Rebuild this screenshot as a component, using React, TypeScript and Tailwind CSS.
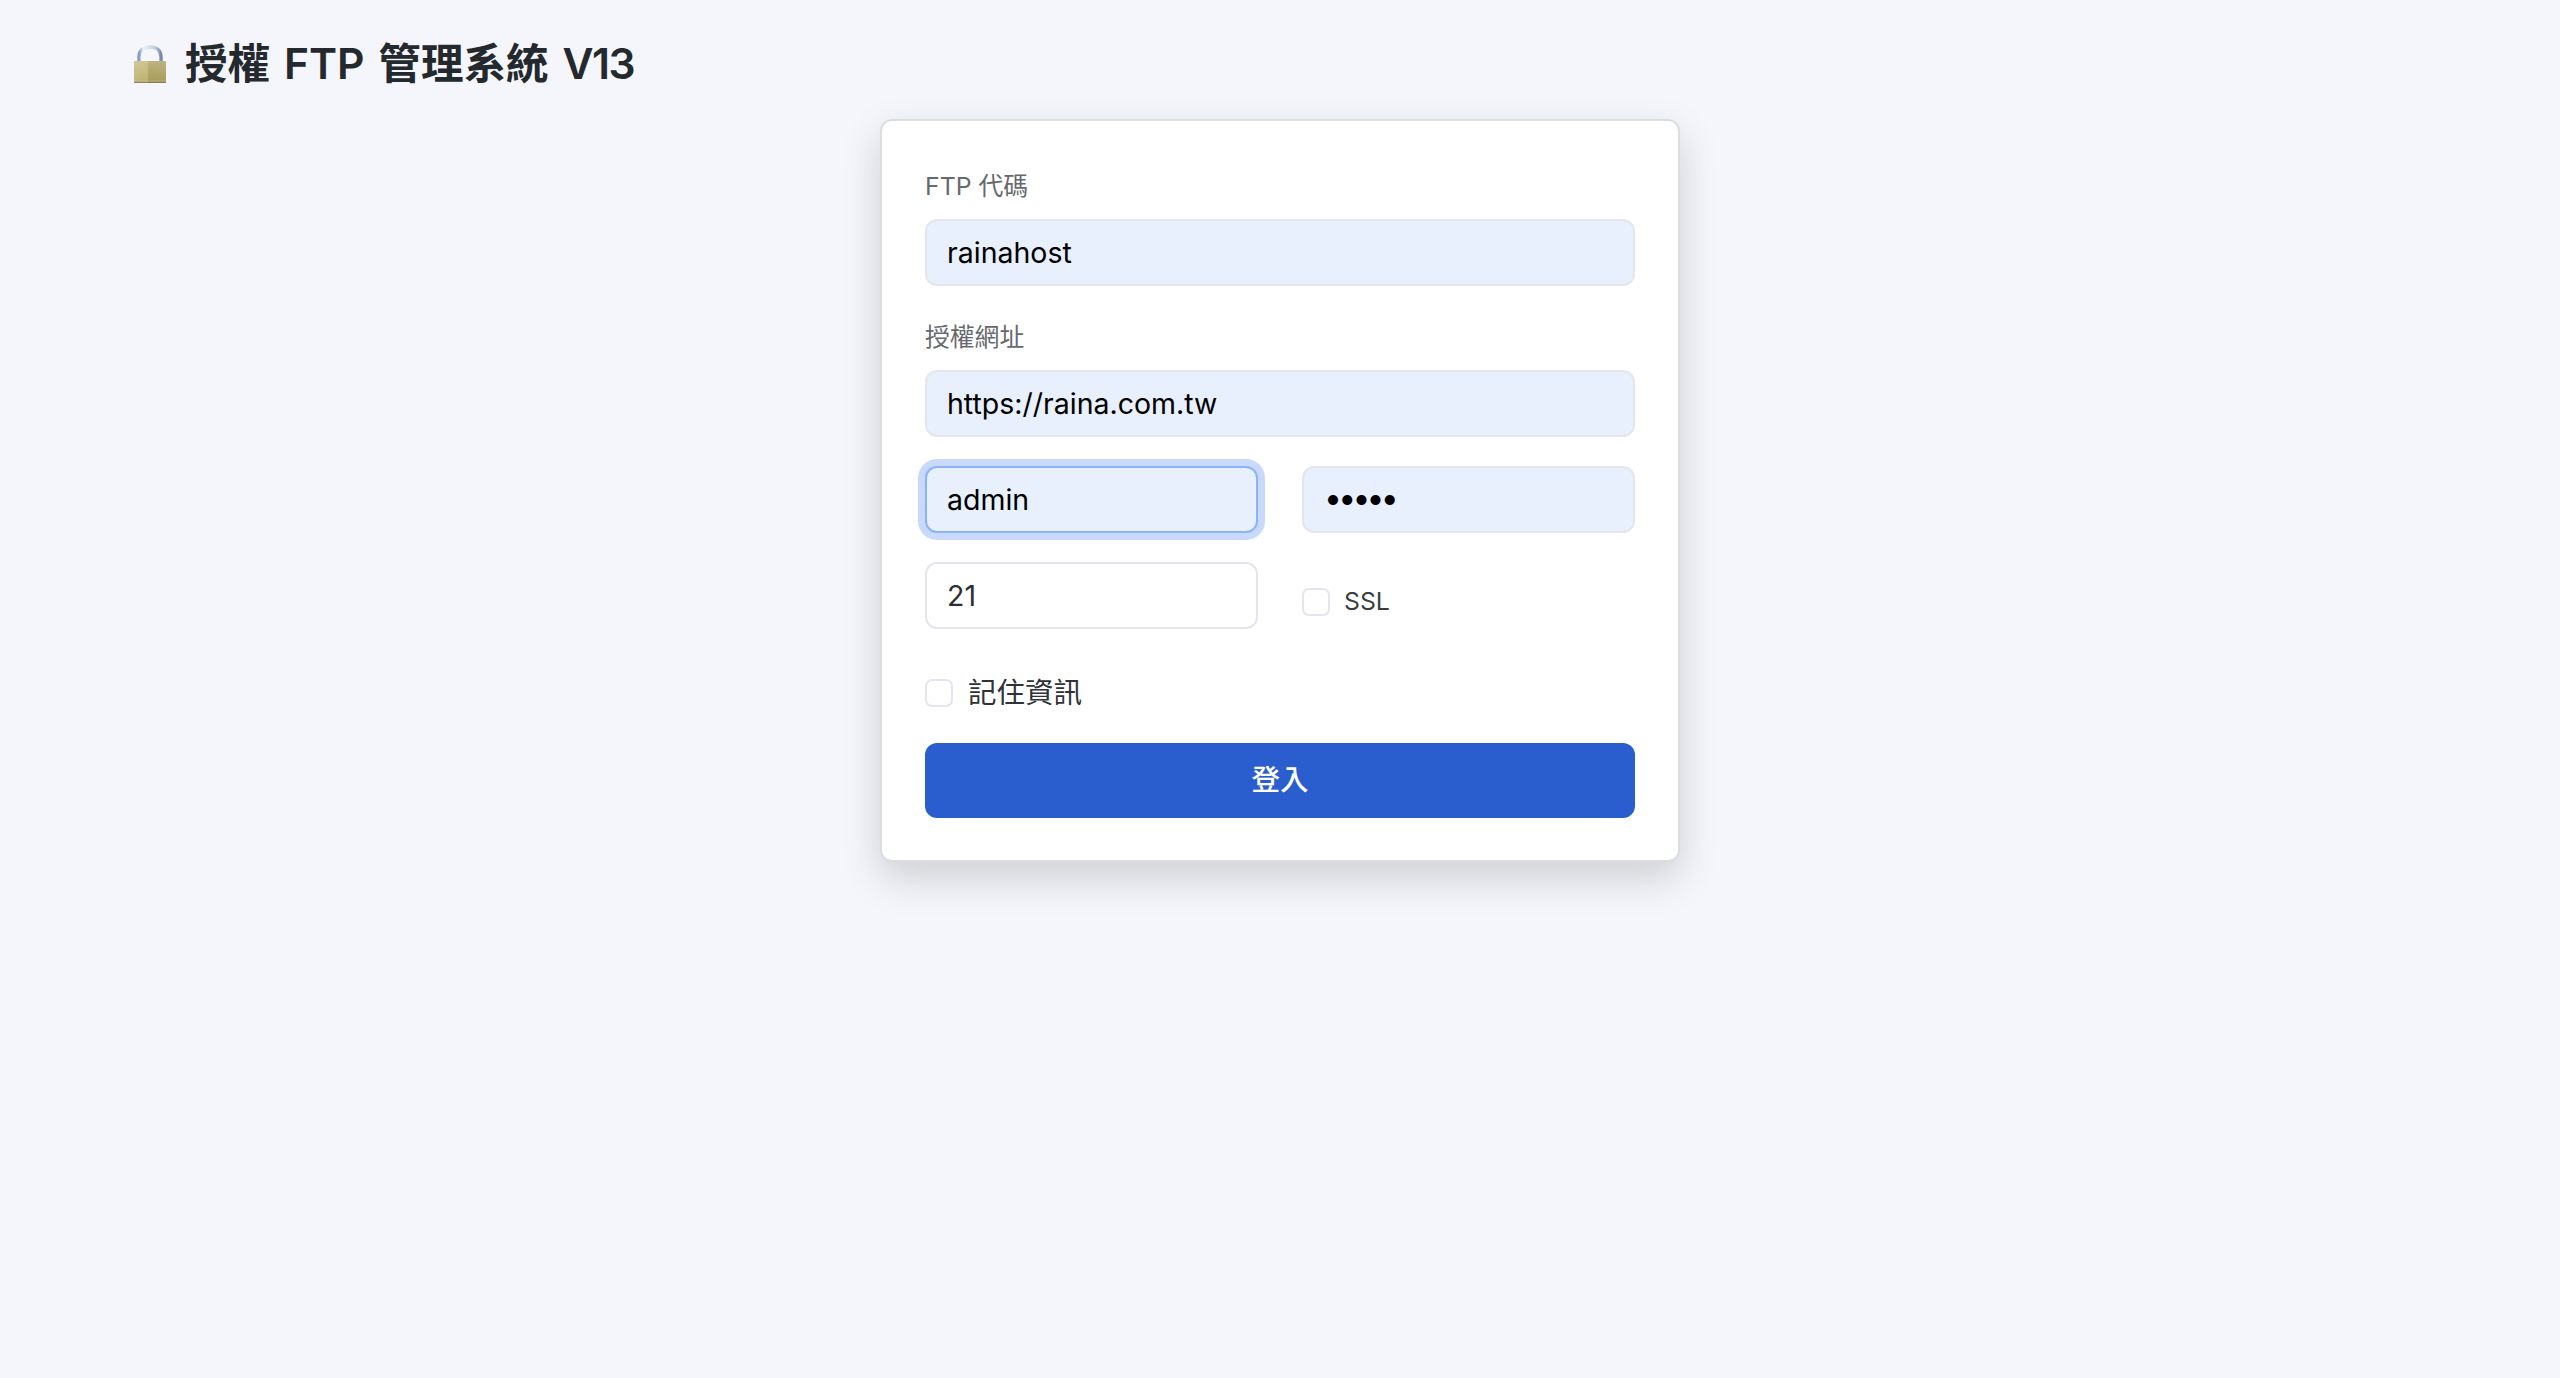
import React from "react";

const FONT = "font-['Inter','Noto_Sans_CJK_TC',sans-serif]";

function LockIcon() {
  return (
    <svg width="32" height="38" viewBox="0 0 32 38" className="shrink-0" aria-hidden="true">
      <defs>
        <linearGradient id="body" x1="0" y1="0" x2="1" y2="0">
          <stop offset="0" stopColor="#c4b878" />
          <stop offset="0.42" stopColor="#bfb372" />
          <stop offset="0.46" stopColor="#a99d5c" />
          <stop offset="1" stopColor="#ab9f5e" />
        </linearGradient>
        <linearGradient id="shade" x1="0" y1="0" x2="0" y2="1">
          <stop offset="0" stopColor="#ffffff" stopOpacity="0.22" />
          <stop offset="0.86" stopColor="#ffffff" stopOpacity="0" />
          <stop offset="1" stopColor="#4f4820" stopOpacity="0.7" />
        </linearGradient>
        <linearGradient id="shackle" x1="0" y1="0" x2="1" y2="0">
          <stop offset="0" stopColor="#8398c0" />
          <stop offset="0.2" stopColor="#eef2fa" />
          <stop offset="0.75" stopColor="#bccae2" />
          <stop offset="1" stopColor="#7687a6" />
        </linearGradient>
      </defs>
      <path d="M5 17V12C5 5.5 9.5 2 16 2S27 5.5 27 12V17" fill="none" stroke="url(#shackle)" strokeWidth="3.4" />
      <rect x="0" y="16" width="32" height="22" rx="1" fill="url(#body)" />
      <rect x="0" y="16" width="32" height="22" rx="1" fill="url(#shade)" />
    </svg>
  );
}

const inputBase =
  "block w-full h-[67px] rounded-[12px] border-2 pl-[20px] pr-[21px] text-[28.5px] outline-none";
const autofill = "bg-[#e8effd] text-black";

function Label({ children }: { children: React.ReactNode }) {
  return <label className="block text-[24.8px] leading-[36px] text-[#666a6e] mb-[15px]">{children}</label>;
}

export default function App() {
  return (
    <div className={`min-h-screen bg-[#f4f6fb] ${FONT}`}>
      <header className="h-[119px] pl-[134px] flex items-start pt-[39px] gap-[19px]">
        <div className="h-[50px] flex items-center"><LockIcon /></div>
        <h1 className="text-[42.6px] leading-[50px] font-semibold text-[#24292e] [word-spacing:3px]">
          授權 FTP 管理系統 <span className="tracking-[-1.5px]">V13</span>
        </h1>
      </header>

      <main className="w-[800px] mx-auto bg-white border-2 border-[#dcdde0] rounded-[12px] px-[43px] pt-[47px] pb-[42px] shadow-[0_16px_40px_rgba(0,0,0,0.16)]">
        <Label>FTP 代碼</Label>
        <input readOnly value="rainahost" className={`${inputBase} ${autofill} border-[#e3e6ec]`} />

        <div className="mt-[33px]">
          <Label>授權網址</Label>
          <input readOnly value="https://raina.com.tw" className={`${inputBase} ${autofill} border-[#e3e6ec]`} />
        </div>

        <div className="grid grid-cols-2 gap-x-[44px] gap-y-[29px] mt-[29px]">
          <input
            readOnly
            value="admin"
            className={`${inputBase} ${autofill} border-[#8ab4f8] shadow-[0_0_0_7px_#c9d9fb]`}
          />
          <input
            readOnly
            type="password"
            value="raina"
            className={`${inputBase} ${autofill} border-[#e3e6ec] text-[32px] tracking-[-3.8px] pb-[4px]`}
          />
          <input readOnly value="21" className={`${inputBase} bg-white text-[#2b2f33] border-[#e3e6ec]`} />
          <label className="flex items-center gap-[14px] text-[24.8px] text-[#3a3e42] pt-[12px]">
            <span className="block w-[28px] h-[28px] rounded-[7px] border-2 border-[#e3e6ec] bg-white" />
            SSL
          </label>
        </div>

        <label className="flex items-center gap-[15px] text-[28.5px] leading-[40px] text-[#2f3337] mt-[44px]">
          <span className="block w-[28px] h-[28px] rounded-[7px] border-2 border-[#e3e6ec] bg-white" />
          記住資訊
        </label>

        <button className="block w-full h-[75px] mt-[30px] rounded-[12px] bg-[#2a5ecf] text-white text-[28.5px] font-medium">
          登入
        </button>
      </main>
    </div>
  );
}
